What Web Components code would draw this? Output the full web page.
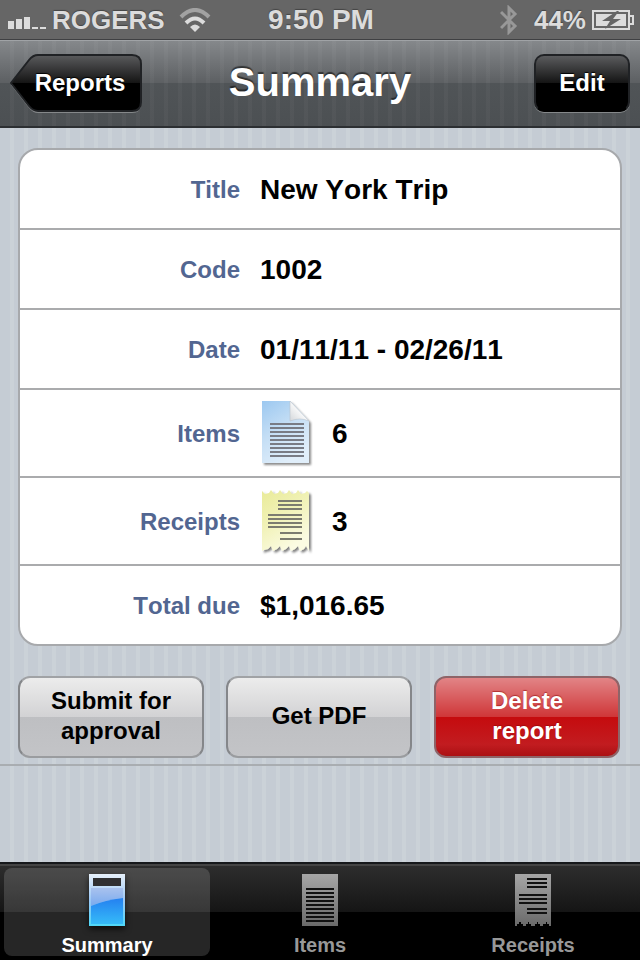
<!DOCTYPE html>
<html lang="en">
<head>
<meta charset="utf-8">
<meta name="viewport" content="width=device-width, initial-scale=1">
<title>Summary</title>
<style>
    body {
        margin: 0;
        min-height: 100vh;
        display: flex;
        flex-direction: column;
        font-family: "Liberation Sans", Arial, sans-serif;
        font-weight: 700;
        font-kerning: none;
        background: repeating-linear-gradient(90deg, #c5ccd4 0 10px, #cbd2d8 10px 14px);
    }

    main {
        flex: 1;
    }

    .actions {
        display: grid;
        grid-template-columns: repeat(3, 1fr);
        gap: 22px;
        padding: 30px 20px 6px 18px;
        border-bottom: 2px solid #a9adb1;
    }
</style>
</head>
<body>
<status-bar>
    <span slot="carrier">ROGERS</span>
    <span slot="time">9:50 PM</span>
    <span slot="battery">44%</span>
</status-bar>

<nav-bar>
    <nav-button slot="left" back>Reports</nav-button>
    Summary
    <nav-button slot="right">Edit</nav-button>
</nav-bar>

<main>
    <field-group>
        <field-row label="Title">New York Trip</field-row>
        <field-row label="Code">1002</field-row>
        <field-row label="Date">01/11/11 - 02/26/11</field-row>
        <field-row label="Items" icon="items">6</field-row>
        <field-row label="Receipts" icon="receipts">3</field-row>
        <field-row label="Total due">$1,016.65</field-row>
    </field-group>

    <div class="actions">
        <action-button>Submit for approval</action-button>
        <action-button>Get PDF</action-button>
        <action-button danger>Delete report</action-button>
    </div>
</main>

<tab-bar>
    <tab-item icon="summary" selected>Summary</tab-item>
    <tab-item icon="items">Items</tab-item>
    <tab-item icon="receipts">Receipts</tab-item>
</tab-bar>

<script>
// Icons in the table rows
const rowIcons = {
    items: `
        <svg width="52" height="66" viewBox="0 0 52 66" aria-hidden="true">
            <defs>
                <linearGradient id="paper" x1="0" y1="0" x2="0.5" y2="1">
                    <stop offset="0" stop-color="#9cc8f0"/>
                    <stop offset="0.5" stop-color="#c4def5"/>
                    <stop offset="1" stop-color="#e0eefa"/>
                </linearGradient>
                <linearGradient id="fold" x1="0" y1="1" x2="0.6" y2="0.4">
                    <stop offset="0" stop-color="#d4d7da"/>
                    <stop offset="1" stop-color="#ffffff"/>
                </linearGradient>
                <filter id="shadow" x="-10%" y="-10%" width="125%" height="125%">
                    <feDropShadow dx="2" dy="2" stdDeviation="1" flood-color="#000" flood-opacity="0.45"/>
                </filter>
            </defs>
            <path d="M0 0H28L47 20V62H0Z" fill="url(#paper)" filter="url(#shadow)"/>
            <path d="M28 0L47 20Q38 16 28 20Z" fill="url(#fold)" stroke="#b9c3cc" stroke-width="0.6"/>
            <path d="M8 23H42M8 27H42M8 31H42M8 35H42M8 39H42M8 43H42M8 47H42M8 51H42M8 55H42" stroke="#797c85" stroke-width="2"/>
        </svg>`,
    receipts: `
        <svg width="52" height="66" viewBox="0 0 52 66" aria-hidden="true">
            <defs>
                <linearGradient id="paper" x1="0" y1="0" x2="0.5" y2="1">
                    <stop offset="0" stop-color="#e9eb98"/>
                    <stop offset="0.5" stop-color="#f1f2b8"/>
                    <stop offset="1" stop-color="#fbfbe2"/>
                </linearGradient>
                <filter id="shadow" x="-10%" y="-10%" width="125%" height="125%">
                    <feDropShadow dx="2" dy="2" stdDeviation="1" flood-color="#000" flood-opacity="0.5"/>
                </filter>
            </defs>
            <path d="M0 2L3 5L7 4L9 1L12 5L16 4L18 1L21 5L25 4L27 1L30 5L34 4L36 1L39 5L43 4L45 2L47 4V62L44 57L42 60L38 62L36 57L33 60L29 62L27 57L24 60L20 62L18 57L15 60L11 62L9 57L6 60L2 61L0 62Z" fill="url(#paper)" filter="url(#shadow)"/>
            <path d="M16 12H40M16 16H40M16 20H40M6 26H40M6 30H40M6 34H40M6 38H40M18 44H40M18 50H40" stroke="#7c7c70" stroke-width="2"/>
        </svg>`
};

// Icons in the bottom bar
const tabIcons = {
    summary: `
        <svg width="36" height="52" viewBox="0 0 36 52" aria-hidden="true">
            <defs>
                <linearGradient id="frame" x1="0" y1="0" x2="0" y2="1">
                    <stop offset="0" stop-color="#e6f0fa"/>
                    <stop offset="0.5" stop-color="#9cc8f6"/>
                    <stop offset="1" stop-color="#4fd8f8"/>
                </linearGradient>
                <linearGradient id="top" x1="0" y1="0" x2="0" y2="1">
                    <stop offset="0" stop-color="#a9c2ee"/>
                    <stop offset="1" stop-color="#79aaee"/>
                </linearGradient>
                <linearGradient id="bottom" x1="0" y1="0" x2="0" y2="1">
                    <stop offset="0" stop-color="#2480f0"/>
                    <stop offset="1" stop-color="#36bbf8"/>
                </linearGradient>
            </defs>
            <path d="M0 0H36V52H0Z" fill="url(#frame)"/>
            <path d="M4 4H32V12H4Z" fill="#303032"/>
            <path d="M2 14H34V24Q16 26 2 32Z" fill="url(#top)"/>
            <path d="M2 32Q16 26 34 24V50H2Z" fill="url(#bottom)"/>
        </svg>`,
    items: `
        <svg width="36" height="52" viewBox="0 0 36 52" aria-hidden="true">
            <defs>
                <linearGradient id="gray" x1="0" y1="0" x2="0" y2="1">
                    <stop offset="0" stop-color="#a6a6a6"/>
                    <stop offset="1" stop-color="#6a6a6a"/>
                </linearGradient>
            </defs>
            <path d="M0 0H36V52H0Z" fill="url(#gray)"/>
            <path d="M4 15H32M4 19H32M4 23H32M4 27H32M4 31H32M4 35H32M4 39H32M4 43H32M4 47H32" stroke="#111" stroke-width="2"/>
        </svg>`,
    receipts: `
        <svg width="36" height="52" viewBox="0 0 36 52" aria-hidden="true">
            <defs>
                <linearGradient id="gray" x1="0" y1="0" x2="0" y2="1">
                    <stop offset="0" stop-color="#a6a6a6"/>
                    <stop offset="1" stop-color="#6a6a6a"/>
                </linearGradient>
            </defs>
            <path d="M0 0H36V52H34V50H32V48H31V50H28V52H25V50H23V48H22V50H20V52H16V50H14V48H13V50H11V52H8V50H6V48H4V50H2V52H0Z" fill="url(#gray)"/>
            <path d="M12 5H32M12 9H32M12 13H32M4 21H32M4 25H32M4 29H32M12 35H32M12 39H32" stroke="#111" stroke-width="2"/>
        </svg>`
};

customElements.define('status-bar', class extends HTMLElement {
    constructor() {
        super();
        const shadow = this.attachShadow({ mode: 'open' });

        shadow.innerHTML = `
            <style>
                :host {
                    display: grid;
                    grid-template-columns: 1fr auto 1fr;
                    align-items: center;
                    box-sizing: border-box;
                    height: 40px;
                    padding: 0 6px 0 8px;
                    background: #666;
                    border-bottom: 1px solid #3f4042;
                    color: #dcdcdc;
                    font-size: 26px;
                    line-height: 38px;
                    text-shadow: 0 -1px 1px #444;
                }
                div { display: flex; align-items: center; gap: 6px; }
                .left svg:last-child { margin-left: 8px; }
                .time { font-size: 28px; }
                .right { justify-content: flex-end; }
                .right svg:first-child { margin-right: 10px; }
                svg { display: block; }
            </style>
            <div class="left">
                <svg width="38" height="20" viewBox="0 0 38 20" aria-hidden="true">
                    <path d="M0 11H6V19H0ZM8 9H14V19H8ZM16 7H22V19H16ZM24 17H30V19H24ZM32 17H38V19H32Z" fill="#dcdcdc"/>
                </svg>
                <slot name="carrier"></slot>
                <svg width="32" height="24" viewBox="0 0 32 24" aria-hidden="true">
                    <g fill="none" stroke-width="4">
                        <path d="M2 9Q16 -5 30 9" stroke="#a2a2a2"/>
                        <path d="M7 15Q16 6 25 15" stroke="#dcdcdc"/>
                    </g>
                    <path d="M11 19Q16 14 21 19L16 24Z" fill="#dcdcdc"/>
                </svg>
            </div>
            <div class="time"><slot name="time"></slot></div>
            <div class="right">
                <svg width="18" height="30" viewBox="0 0 18 30" aria-hidden="true">
                    <path d="M1 7L15 21L9 27V3L15 9L1 23" fill="none" stroke="#989898" stroke-width="3"/>
                </svg>
                <slot name="battery"></slot>
                <svg width="42" height="20" viewBox="0 0 42 20" aria-hidden="true">
                    <path d="M1 1H37V19H1Z" fill="none" stroke="#dcdcdc" stroke-width="2"/>
                    <path d="M38 6H41V14H38" fill="none" stroke="#dcdcdc" stroke-width="2"/>
                    <path d="M4 4H34V16H4Z" fill="#dcdcdc"/>
                    <path d="M25 1L10 11H18L13 19L29 9H21L27 1Z" fill="#666"/>
                </svg>
            </div>
        `;
    }
});

customElements.define('nav-bar', class extends HTMLElement {
    constructor() {
        super();
        const shadow = this.attachShadow({ mode: 'open' });

        shadow.innerHTML = `
            <style>
                :host {
                    display: grid;
                    grid-template-columns: 1fr auto 1fr;
                    align-items: center;
                    box-sizing: border-box;
                    height: 88px;
                    padding: 0 10px 2px;
                    background:
                        repeating-linear-gradient(90deg, #ffffff00 0 10px, #ffffff08 10px 14px),
                        linear-gradient(#85888b, #5c5f62 50%, #505457 50%, #4c5053);
                    border-top: 1px solid #a0a3a6;
                    border-bottom: 2px solid #2c2f32;
                }
                h1 {
                    margin: 0;
                    color: #fff;
                    font-size: 40px;
                    line-height: 48px;
                    padding-bottom: 2px;
                    text-shadow: 0 -2px 1px #0008;
                }
                .right { justify-self: end; }
            </style>
            <div><slot name="left"></slot></div>
            <h1><slot></slot></h1>
            <div class="right"><slot name="right"></slot></div>
        `;
    }
});

customElements.define('nav-button', class extends HTMLElement {
    constructor() {
        super();
        const shadow = this.attachShadow({ mode: 'open' });
        const back = this.hasAttribute('back');

        // The arrow outline lies behind the caption
        const arrow = `
            <svg width="132" height="60" viewBox="0 0 132 60" aria-hidden="true">
                <defs>
                    <linearGradient id="fill" x1="0" y1="0" x2="0" y2="1">
                        <stop offset="0" stop-color="#5a5b5d"/>
                        <stop offset="0.5" stop-color="#141414"/>
                        <stop offset="0.5" stop-color="#000"/>
                    </linearGradient>
                </defs>
                <path d="M28 2H122Q131 2 131 11V50Q131 59 122 59H28Q23 59 19 54L1 31L19 7Q23 2 28 2Z" fill="#85888a"/>
                <path d="M28 1H122Q131 1 131 10V48Q131 57 122 57H28Q23 57 19 52L1 29L19 6Q23 1 28 1Z" fill="url(#fill)" stroke="#202225" stroke-width="2"/>
            </svg>`;

        shadow.innerHTML = `
            <style>
                :host { display: block; }
                button {
                    position: relative;
                    display: block;
                    box-sizing: border-box;
                    height: 58px;
                    min-width: 96px;
                    padding: 0 20px;
                    border: 2px solid #202225;
                    border-bottom-color: #000;
                    border-radius: 10px;
                    background: linear-gradient(#5a5b5d, #141414 50%, #000 50%);
                    box-shadow: 0 1px 0 #85888a;
                    color: #fff;
                    font: inherit;
                    font-size: 24px;
                    font-kerning: none;
                    line-height: 28px;
                    text-shadow: 0 -1px 1px #000;
                }
                .back {
                    width: 132px;
                    padding: 0 16px 0 24px;
                    border: 0;
                    background: none;
                    box-shadow: none;
                }
                svg { position: absolute; left: 0; top: 0; }
                span { position: relative; }
            </style>
            <button type="button" class="${back ? 'back' : ''}">${back ? arrow : ''}<span><slot></slot></span></button>
        `;
    }
});

customElements.define('field-group', class extends HTMLElement {
    constructor() {
        super();
        const shadow = this.attachShadow({ mode: 'open' });

        shadow.innerHTML = `
            <style>
                :host {
                    display: block;
                    margin: 20px 18px 0;
                    border: 2px solid #a7a9ac;
                    border-radius: 20px;
                    background: #fff;
                    overflow: hidden;
                }
                ::slotted(:not(:last-child)) { border-bottom: 2px solid #aaabad; }
            </style>
            <slot></slot>
        `;
    }
});

customElements.define('field-row', class extends HTMLElement {
    constructor() {
        super();
        const shadow = this.attachShadow({ mode: 'open' });
        const icon = rowIcons[this.getAttribute('icon')] || '';

        shadow.innerHTML = `
            <style>
                :host {
                    display: flex;
                    align-items: center;
                    gap: 20px;
                    min-height: 78px;
                    padding-top: 2px;
                    box-sizing: content-box;
                    min-height: 76px;
                }
                :host([icon]) { min-height: 84px; }
                .label {
                    flex: 0 0 220px;
                    text-align: right;
                    color: #526691;
                    font-size: 24px;
                    line-height: 32px;
                }
                .value {
                    display: flex;
                    align-items: center;
                    gap: 18px;
                    color: #000;
                    font-size: 28px;
                    line-height: 32px;
                }
                svg { display: block; margin-left: 2px; }
            </style>
            <div class="label">${this.getAttribute('label')}</div>
            <div class="value">${icon}<span><slot></slot></span></div>
        `;
    }
});

customElements.define('action-button', class extends HTMLElement {
    constructor() {
        super();
        const shadow = this.attachShadow({ mode: 'open' });

        shadow.innerHTML = `
            <style>
                :host { display: block; }
                button {
                    width: 100%;
                    height: 82px;
                    padding: 0 24px 2px;
                    border: 2px solid #85878a;
                    border-top-color: #a0a2a5;
                    border-bottom-color: #9a9c9f;
                    border-radius: 12px;
                    background: linear-gradient(#ececec, #d2d2d4 50%, #bebfc2 50%, #c3c4c7);
                    color: #000;
                    font: inherit;
                    font-size: 24px;
                    font-kerning: none;
                    line-height: 30px;
                }
                :host([danger]) button {
                    border-color: #8e6468;
                    background: linear-gradient(#e28486, #cf3638 50%, #c50b0e 50%, #c21c20 85%, #ab1013);
                    color: #fff;
                    text-shadow: 0 -1px 1px #8008;
                }
            </style>
            <button type="button"><slot></slot></button>
        `;
    }
});

customElements.define('tab-bar', class extends HTMLElement {
    constructor() {
        super();
        const shadow = this.attachShadow({ mode: 'open' });

        shadow.innerHTML = `
            <style>
                :host {
                    display: block;
                    border-top: 2px solid #16181b;
                    background: linear-gradient(#2e2e2e, #151515 48px, #000 48px);
                }
                nav {
                    display: grid;
                    grid-template-columns: repeat(3, 1fr);
                    gap: 7px;
                    padding: 2px 4px 4px;
                    border-top: 2px solid #444;
                }
            </style>
            <nav><slot></slot></nav>
        `;
    }
});

customElements.define('tab-item', class extends HTMLElement {
    constructor() {
        super();
        const shadow = this.attachShadow({ mode: 'open' });

        shadow.innerHTML = `
            <style>
                :host { display: block; }
                a {
                    display: flex;
                    flex-direction: column;
                    align-items: center;
                    gap: 7px;
                    box-sizing: border-box;
                    height: 88px;
                    padding-top: 6px;
                    border-radius: 8px;
                    color: #989898;
                    font-size: 20px;
                    line-height: 24px;
                    text-decoration: none;
                }
                :host([selected]) a {
                    background: #ffffff26;
                    color: #fff;
                }
                svg { display: block; flex: none; }
                :host([selected]) svg { filter: drop-shadow(0 3px 3px #000a); }
            </style>
            <a href="#">${tabIcons[this.getAttribute('icon')]}<span><slot></slot></span></a>
        `;
    }
});
</script>
</body>
</html>
